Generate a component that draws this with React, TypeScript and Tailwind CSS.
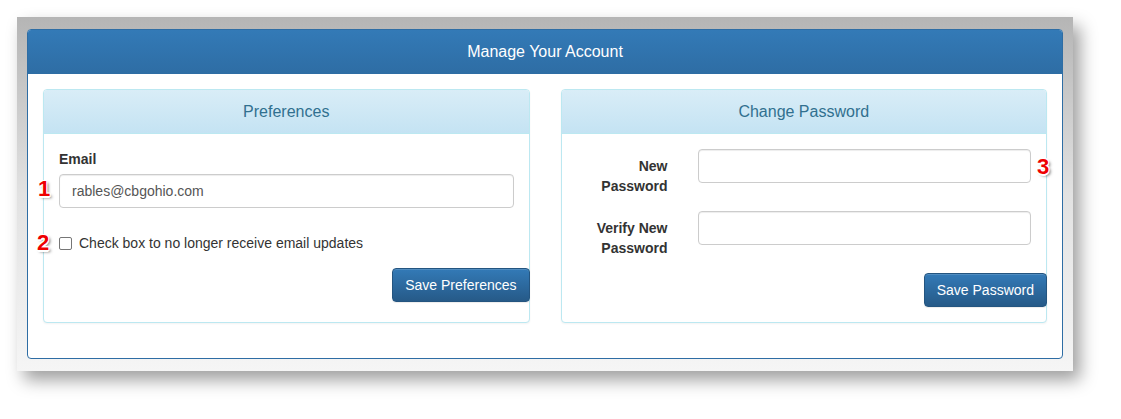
import React from "react"

const marker = "absolute text-[22px] font-bold leading-none text-[#ee0000] [text-shadow:-1px_-1px_0_#fff,1px_-1px_0_#fff,-1px_1px_0_#fff,1px_1px_0_#fff,0_-1.5px_0_#fff,0_1.5px_0_#fff,2px_2px_3px_rgba(0,0,0,0.55)]"

function Num({ n, className }: { n: string; className: string }) {
    return <span className={`${marker} ${className}`}>{n}</span>
}

function InfoPanel({ title, children }: { title: string; children: React.ReactNode }) {
    return (
        <div className="flex flex-col border border-[#bce8f1] rounded-[4px] bg-white shadow-[0_1px_2px_rgba(0,0,0,0.05)]">
            <div className="h-[44px] flex items-center justify-center rounded-t-[3px] border-b border-[#bce8f1] bg-gradient-to-b from-[#d9edf7] to-[#c4e3f3] text-[16px] text-[#31708f]">
                {title}
            </div>
            <div className="flex-1 pl-[15px] pt-[15px] pb-[15px]">
                {children}
            </div>
        </div>
    )
}

function Button({ label }: { label: string }) {
    return (
        <button className="relative -mr-px h-[34px] px-[12px] rounded-[4px] border border-[#245580] bg-gradient-to-b from-[#337ab7] to-[#265a88] text-[14px] text-white shadow-[inset_0_1px_0_rgba(255,255,255,0.15),0_1px_1px_rgba(0,0,0,0.075)]">
            {label}
        </button>
    )
}

const inputCls = "w-full h-[34px] px-[12px] rounded-[4px] border border-[#ccc] bg-white text-[14px] text-[#555] shadow-[inset_0_1px_1px_rgba(0,0,0,0.075)]"

export default function App() {
    return (
        <div className="min-h-[419px] bg-white pl-[17px] pt-[17px] font-['Liberation_Sans',Arial,sans-serif] text-[14px] text-[#333]">
            <div className="relative w-[1056px] h-[354px] pt-[12px] px-[10px] bg-gradient-to-b from-[#b5b5b5] via-[#e2e2e2] to-[#f5f5f5] shadow-[7px_9px_16px_rgba(0,0,0,0.38)]">
                <div className="h-[330px] border border-[#2e6da4] rounded-[4px] bg-white">
                    <div className="h-[44px] flex items-center justify-center rounded-t-[3px] bg-gradient-to-b from-[#337ab7] to-[#2e6da4] text-[16px] text-white">
                        Manage Your Account
                    </div>
                    <div className="grid grid-cols-2 gap-[31px] px-[15px] pt-[15px]">
                        <InfoPanel title="Preferences">
                            <div className="pr-[15px]">
                                <div className="font-bold leading-[20px] mb-[5px]">Email</div>
                                <input className={inputCls} defaultValue="rables@cbgohio.com" />
                                <label className="flex items-center mt-[25px] leading-[20px]">
                                    <span className="w-[13px] h-[13px] border border-[#767676] rounded-[2px] bg-white mr-[7px]" />
                                    Check box to no longer receive email updates
                                </label>
                            </div>
                            <div className="flex justify-end mt-[15px]">
                                <Button label="Save Preferences" />
                            </div>
                        </InfoPanel>
                        <InfoPanel title="Change Password">
                            <div className="pr-[15px]">
                                <div className="flex">
                                    <div className="w-[91px] pt-[7px] text-right font-bold leading-[20px]">New<br />Password</div>
                                    <div className="flex-1 pl-[30px]">
                                        <input type="password" className={inputCls} />
                                    </div>
                                </div>
                                <div className="flex mt-[15px]">
                                    <div className="w-[91px] pt-[7px] text-right font-bold leading-[20px]">Verify New<br />Password</div>
                                    <div className="flex-1 pl-[30px]">
                                        <input type="password" className={inputCls} />
                                    </div>
                                </div>
                            </div>
                            <div className="flex justify-end mt-[15px]">
                                <Button label="Save Password" />
                            </div>
                        </InfoPanel>
                    </div>
                </div>
                <Num n="1" className="left-[21px] top-[161px]" />
                <Num n="2" className="left-[20px] top-[215px]" />
                <Num n="3" className="left-[1020px] top-[139px]" />
            </div>
        </div>
    )
}
